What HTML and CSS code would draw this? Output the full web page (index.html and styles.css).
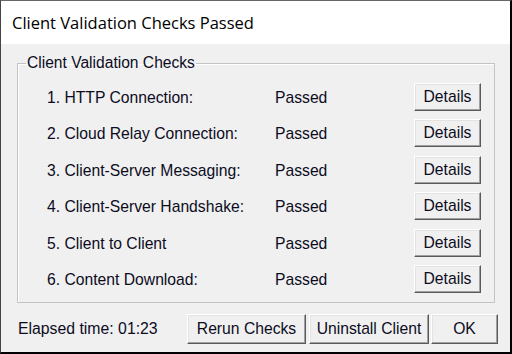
FILE: index.html
```html
<!DOCTYPE html>
<html lang="en">
<head>
    <meta charset="UTF-8">
    <title>Client Validation Checks Passed</title>
    <link rel="stylesheet" href="styles.css">
</head>
<body>
	<div class="window">
		<div class="title-bar">Client Validation Checks Passed</div>
		<div class="content">
			<fieldset class="checks-group">
				<legend class="checks-legend">Client Validation Checks</legend>
				<div class="checks">
					<div class="check-name">1. HTTP Connection:</div>
					<div class="check-status">Passed</div>
					<button class="btn btn-details">Details</button>

					<div class="check-name">2. Cloud Relay Connection:</div>
					<div class="check-status">Passed</div>
					<button class="btn btn-details">Details</button>

					<div class="check-name">3. Client-Server Messaging:</div>
					<div class="check-status">Passed</div>
					<button class="btn btn-details">Details</button>

					<div class="check-name">4. Client-Server Handshake:</div>
					<div class="check-status">Passed</div>
					<button class="btn btn-details">Details</button>

					<div class="check-name">5. Client to Client</div>
					<div class="check-status">Passed</div>
					<button class="btn btn-details">Details</button>

					<div class="check-name">6. Content Download:</div>
					<div class="check-status">Passed</div>
					<button class="btn btn-details">Details</button>
				</div>
			</fieldset>

			<div class="footer">
				<div class="elapsed">Elapsed time: 01:23</div>
				<div class="footer-actions">
					<button class="btn btn-rerun">Rerun Checks</button>
					<button class="btn btn-uninstall">Uninstall Client</button>
					<button class="btn btn-ok">OK</button>
				</div>
			</div>
		</div>
	</div>
</body>
</html>
```

FILE: styles.css
```css
body {
	margin: 0;
	font-family: "Liberation Sans", Arial, sans-serif;
	color: #0c0c1e;
}

.window {
	width: 512px;
	height: 354px;
	box-sizing: border-box;
	border-left: 1px solid #444;
	border-top: 1px solid #666;
	border-right: 2px solid #000;
	border-bottom: 2px solid #000;
	display: flex;
	flex-direction: column;
	background: #f0f0f0;
}

.title-bar {
	height: 43px;
	background: #fff;
	padding-left: 11px;
	display: flex;
	align-items: center;
	font-family: "Open Sans", sans-serif;
	font-size: 16.5px;
	color: #000;
}

.content {
	flex: 1;
	padding: 10px 12px 0 16px;
	display: flex;
	flex-direction: column;
}

.checks-group {
	margin: 0 3px 0 0;
	padding: 0 13px 9px 8px;
	border: 1px solid #c4c4c4;
	box-shadow: inset 1px 1px #fff;
}

.checks-legend {
	padding: 0 1px;
	font-size: 15.6px;
	line-height: 18px;
}

.checks {
	margin-top: 11px;
	margin-left: 21px;
	display: grid;
	grid-template-columns: 228px 1fr 67px;
	row-gap: 8.4px;
	align-items: center;
	font-size: 15.7px;
}

.check-name,
.check-status {
	padding-top: 2px;
}

.btn {
	margin: 0;
	padding: 0;
	font-family: "Liberation Sans", Arial, sans-serif;
	font-size: 15.7px;
	color: #0c0c1e;
	background: #f0f0f0;
	border: 1px solid;
	border-color: #fff #5a5a5a #5a5a5a #fff;
	box-shadow: inset -1px -1px #a0a0a0, inset 1px 1px #e3e3e3;
}

.btn-details {
	height: 28px;
}

.footer {
	display: flex;
	align-items: center;
	margin-top: 11px;
	font-size: 15.8px;
}

.elapsed {
	flex: 1;
	padding-left: 1px;
}

.footer-actions {
	display: flex;
	gap: 2px;
}

.footer-actions .btn {
	height: 30px;
}

.btn-rerun {
	width: 119px;
	margin-right: 1px;
}

.btn-uninstall {
	width: 120px;
}

.btn-ok {
	width: 67px;
}
```
